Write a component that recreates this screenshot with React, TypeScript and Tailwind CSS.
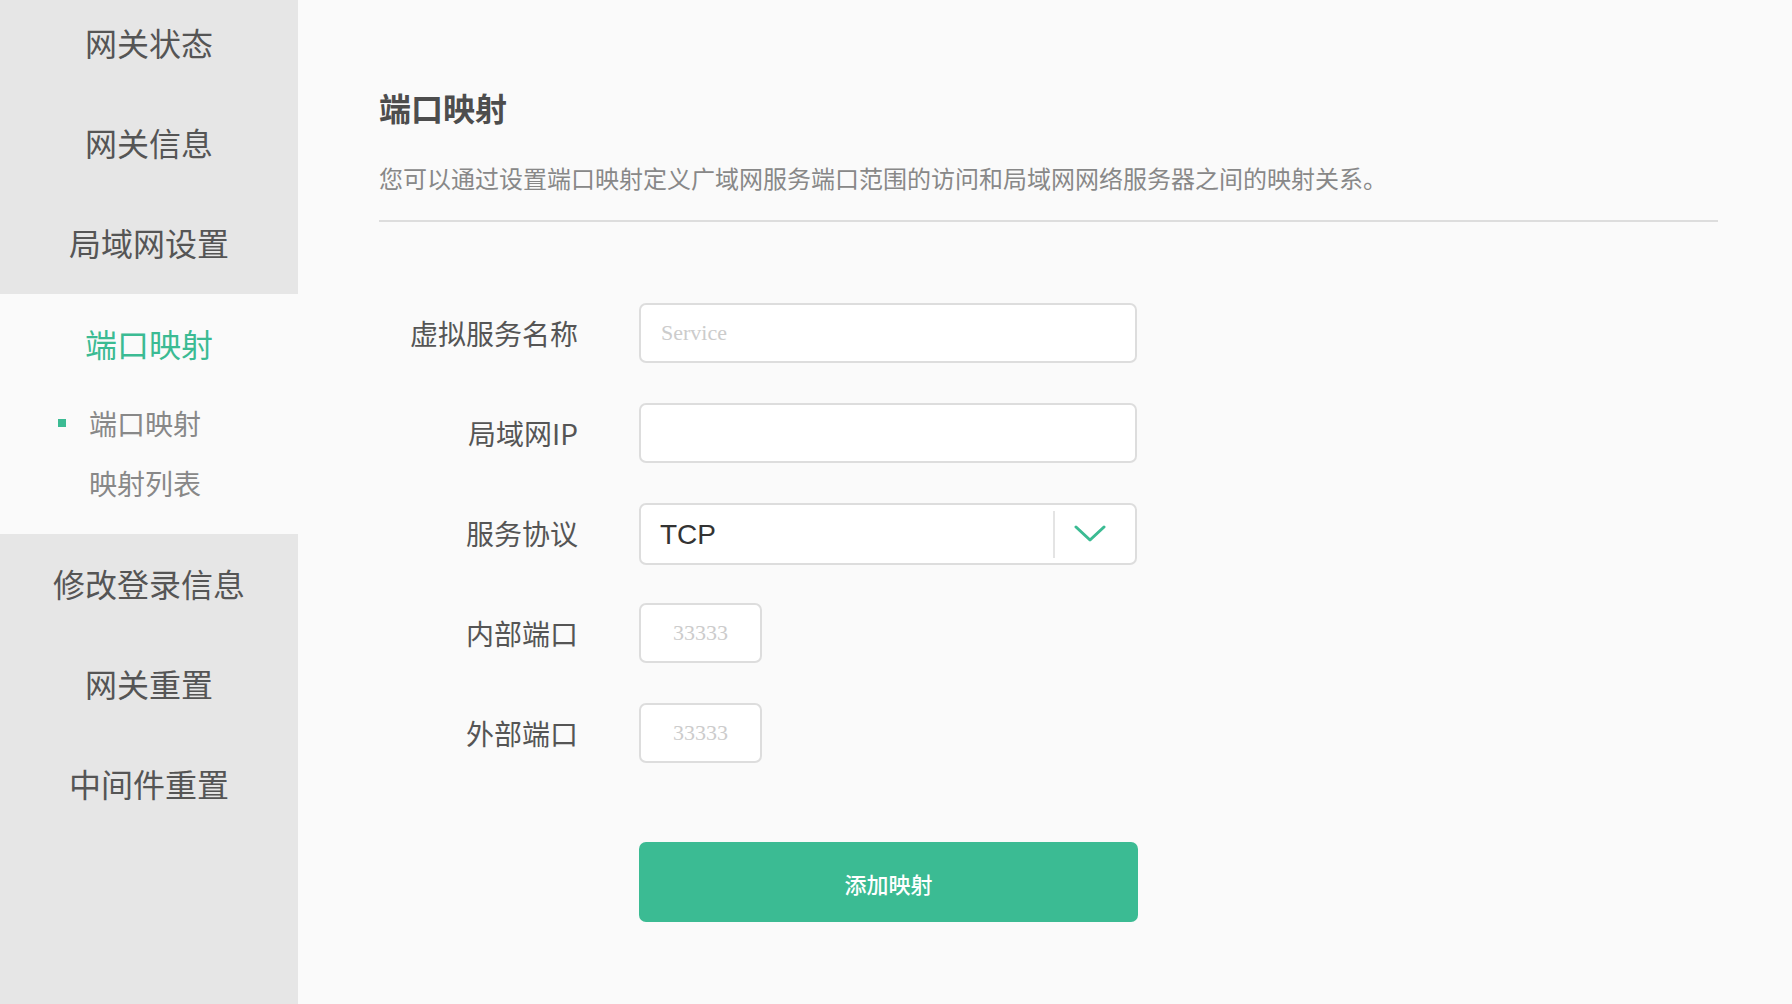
import React from "react";

const font = { fontFamily: '"Noto Sans CJK SC", "Noto Sans", sans-serif' };

function SideItem({ label }: { label: string }) {
  return (
    <div className="h-[100px] flex items-center justify-center text-[32px] text-[#555555]">
      {label}
    </div>
  );
}

function Row({ label, children }: { label: string; children: React.ReactNode }) {
  return (
    <div className="h-[60px] flex items-center">
      <div className="w-[199px] text-right text-[28px] text-[#555555] leading-none">{label}</div>
      <div className="ml-[61px] flex items-center">{children}</div>
    </div>
  );
}

export default function App() {
  return (
    <div
      className="flex w-[1792px] h-[1004px] bg-[#fafafa] overflow-hidden"
      style={font}
    >
      <aside className="w-[298px] shrink-0 bg-[#e6e6e6] flex flex-col">
        <div className="-mt-[8px] h-[302px]">
          <SideItem label="网关状态" />
          <SideItem label="网关信息" />
          <SideItem label="局域网设置" />
        </div>
        <div className="bg-[#fafafa] h-[240px] pt-[24px]">
          <div className="h-[50px] flex items-center justify-center text-[32px] text-[#3bbb93]">
            端口映射
          </div>
          <div className="mt-[25px] flex flex-col">
            <div className="h-[60px] flex items-center pl-[58px]">
              <span className="w-[8px] h-[8px] bg-[#3bbb93] mr-[23px]" />
              <span className="text-[28px] text-[#888888]">端口映射</span>
            </div>
            <div className="h-[60px] flex items-center pl-[89px]">
              <span className="text-[28px] text-[#888888]">映射列表</span>
            </div>
          </div>
        </div>
        <div className="-mt-[1px]">
          <SideItem label="修改登录信息" />
          <SideItem label="网关重置" />
          <SideItem label="中间件重置" />
        </div>
      </aside>

      <main className="flex-1 pl-[81px] pr-[74px] pt-[83px]">
        <h1 className="h-[48px] leading-[48px] text-[32px] font-bold text-[#4d4d4d]">端口映射</h1>
        <p className="mt-[29px] h-[36px] leading-[36px] text-[24px] text-[#888888]">
          您可以通过设置端口映射定义广域网服务端口范围的访问和局域网网络服务器之间的映射关系。
        </p>
        <div className="mt-[24px] border-t-2 border-[#dddddd]" />

        <div className="mt-[81px] flex flex-col gap-[40px]">
          <Row label="虚拟服务名称">
            <input
              placeholder="Service"
              className="w-[498px] h-[60px] bg-white border-2 border-[#dddddd] rounded-[7px] px-[20px] text-[22px] outline-none placeholder:text-[#cccccc]"
              style={{ fontFamily: '"Liberation Serif", serif' }}
            />
          </Row>
          <Row label="局域网IP">
            <input className="w-[498px] h-[60px] bg-white border-2 border-[#dddddd] rounded-[7px] px-[20px] text-[22px] outline-none" />
          </Row>
          <Row label="服务协议">
            <div className="w-[498px] h-[62px] mt-[2px] bg-white border-2 border-[#dddddd] rounded-[7px] flex items-center">
              <span
                className="flex-1 pl-[19px] pt-[2px] text-[28px] text-[#333333]"
                style={{ fontFamily: '"Liberation Sans", Arial, sans-serif' }}
              >
                TCP
              </span>
              <span className="w-[2px] h-[47px] bg-[#e4e4e4]" />
              <span className="w-[80px] pl-[19px] flex items-center justify-start">
                <svg width="32" height="18" viewBox="0 0 32 18" fill="none">
                  <path d="M2 2 L16 15 L30 2" stroke="#3bbb93" strokeWidth="3" strokeLinecap="round" strokeLinejoin="round" />
                </svg>
              </span>
            </div>
          </Row>
          <Row label="内部端口">
            <input
              placeholder="33333"
              className="w-[123px] h-[60px] bg-white border-2 border-[#dddddd] rounded-[7px] text-center text-[22px] outline-none placeholder:text-[#cccccc]"
              style={{ fontFamily: '"Liberation Serif", serif' }}
            />
          </Row>
          <Row label="外部端口">
            <input
              placeholder="33333"
              className="w-[123px] h-[60px] bg-white border-2 border-[#dddddd] rounded-[7px] text-center text-[22px] outline-none placeholder:text-[#cccccc]"
              style={{ fontFamily: '"Liberation Serif", serif' }}
            />
          </Row>
        </div>

        <div className="mt-[79px] pl-[260px]">
          <button className="w-[499px] h-[80px] pt-[3px] rounded-[7px] bg-[#3bbb93] text-white text-[22px] font-medium">
            添加映射
          </button>
        </div>
      </main>
    </div>
  );
}
